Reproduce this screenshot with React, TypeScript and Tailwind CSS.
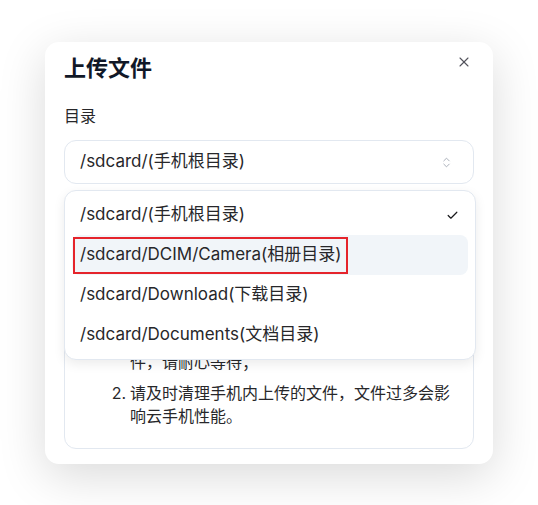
import { X, ChevronsUpDown, Check } from 'lucide-react';

const options = [
  '/sdcard/(手机根目录)',
  '/sdcard/DCIM/Camera(相册目录)',
  '/sdcard/Download(下载目录)',
  '/sdcard/Documents(文档目录)',
];

export default function App() {
  return (
    <div className="min-h-screen bg-white pt-[42px] pl-[45px] font-['Inter','Noto_Sans_CJK_SC',sans-serif] text-[#1f2937]">
      <div className="relative w-[448px] rounded-[14px] bg-white px-[19px] pt-[12px] pb-[15px] shadow-[0_12px_48px_rgba(0,0,0,0.15)]">
        <h2 className="text-[22px] leading-7 font-bold text-[#111827]">上传文件</h2>
        <button className="absolute top-[12px] right-[21px] w-4 h-4 flex items-center justify-center text-[#52525b]">
          <X size={16} strokeWidth={1.6} />
        </button>

        <div className="mt-[22px] text-[16px] leading-6 text-[#27272a]">目录</div>

        <div className="relative mt-3">
          <div className="flex h-[44px] items-center justify-between rounded-xl border border-[#e2e8f0] bg-white pl-[15px] pr-[20px] text-[17px] text-[#27272a]">
            <span>/sdcard/(手机根目录)</span>
            <ChevronsUpDown size={13} strokeWidth={1.6} className="text-[#9ca3af]" />
          </div>

          <div className="absolute left-0 top-[50px] z-10 w-[412px] rounded-xl border border-[#e2e8f0] bg-white px-[7px] py-1 shadow-[0_4px_12px_rgba(0,0,0,0.08)]">
            {options.map((o, i) => (
              <div
                key={o}
                className={
                  i === 1
                    ? 'flex h-10 items-center justify-between rounded-lg bg-[#f1f5f9] px-2 text-[17px] text-[#27272a]'
                    : 'flex h-10 items-center justify-between rounded-lg px-2 text-[17px] text-[#27272a]'
                }
              >
                {i === 1 ? (
                  <span className="-ml-[7px] inline-flex h-[37px] items-center border-2 border-[#e5242b] px-[5px]">{o}</span>
                ) : (
                  <span>{o}</span>
                )}
                {i === 0 && <Check size={13} strokeWidth={2.2} className="mr-[1px] text-[#18181b]" />}
              </div>
            ))}
          </div>
        </div>

        <div className="mt-3 rounded-xl border border-[#e2e8f0] pt-[22px] pb-5 pl-[45px] pr-4 text-[16px] leading-[23px] text-[#27272a]">
          <div className="-ml-[26px] mb-4 leading-6 font-semibold">温馨提示</div>
          <ol className="space-y-2">
            <li className="flex gap-1">
              <span className="w-4 shrink-0 text-right">1.</span>
              <span>上传的文件将保存至所选目录，可在云手机中直接查看，文件上传过程中请勿关闭本窗口，上传速度受网络环境影响，单个文件越大所需时间越长，如需上传体积较大的视频或安装文件，请耐心等待；</span>
            </li>
            <li className="flex gap-1">
              <span className="w-4 shrink-0 text-right">2.</span>
              <span>请及时清理手机内上传的文件，文件过多会影响云手机性能。</span>
            </li>
          </ol>
        </div>
      </div>
    </div>
  );
}
